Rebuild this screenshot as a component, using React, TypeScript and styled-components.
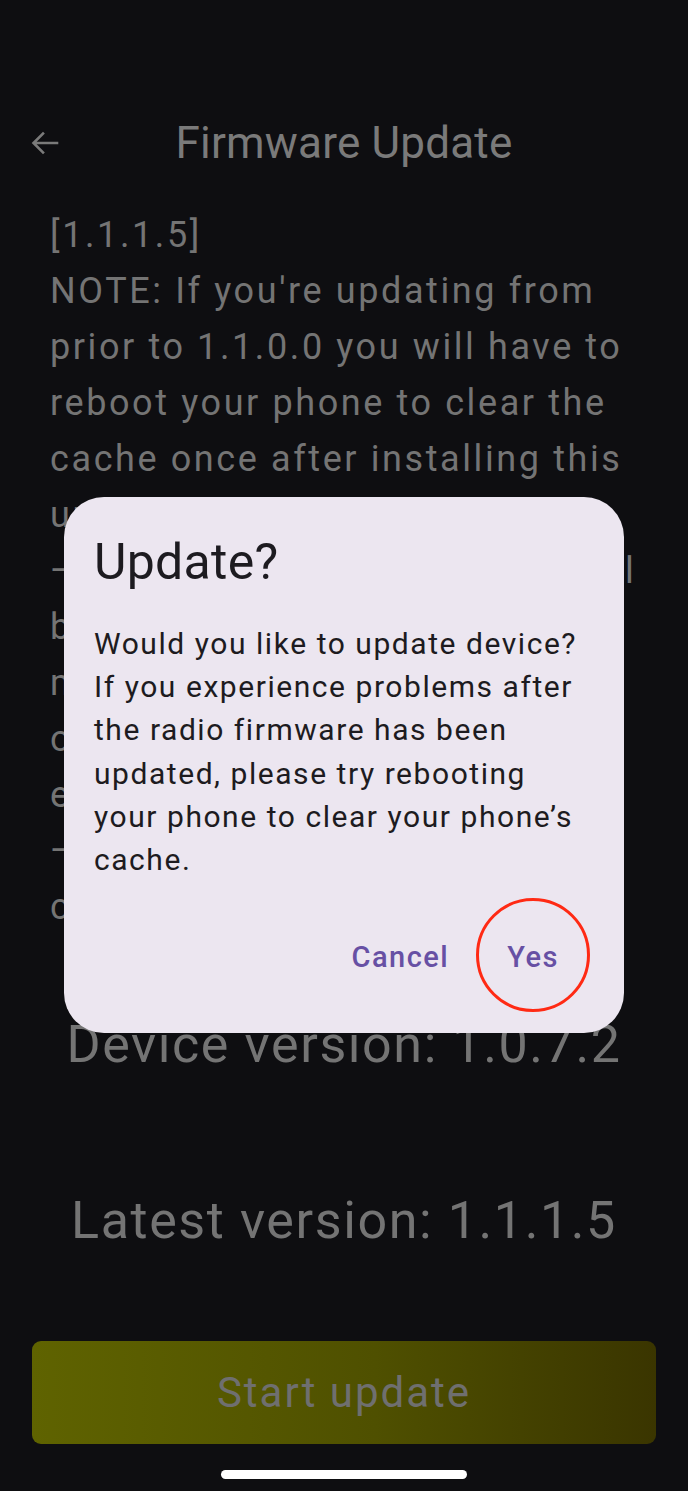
import React from "react";
import styled, { createGlobalStyle } from "styled-components";

const Global = createGlobalStyle`
  html, body { margin: 0; padding: 0; background: #0e0e11; }
  body { font-family: Roboto, "Noto Sans", sans-serif; }
  * { box-sizing: border-box; }
`;

const Page = styled.div`
  position: relative;
  width: 688px;
  height: 1491px;
  background: #0e0e11;
  display: flex;
  flex-direction: column;
  padding-top: 100px;
  overflow: hidden;
`;

const Header = styled.header`
  position: relative;
  height: 86px;
  display: flex;
  align-items: center;
  justify-content: center;
`;

const BackButton = styled.button`
  position: absolute;
  left: 22px;
  top: 50%;
  transform: translateY(-50%);
  width: 46px;
  height: 46px;
  border: none;
  background: transparent;
  padding: 0;
  display: flex;
  align-items: center;
  justify-content: center;
`;

const Title = styled.h1`
  margin: 0;
  font-family: Roboto, sans-serif;
  font-weight: 400;
  font-size: 44px;
  color: #7a7a7a;
  letter-spacing: 0.2px;
`;

const Notes = styled.div`
  margin-top: 21px;
  padding: 0 0 0 50px;
  font-size: 36px;
  line-height: 56px;
  letter-spacing: 2.6px;
  color: #747474;
  white-space: nowrap;
`;

const NoteLine = styled.div``;

const Version = styled.div<{ $gap: number }>`
  margin-top: ${(p) => p.$gap}px;
  text-align: center;
  font-size: 52px;
  line-height: 62px;
  letter-spacing: 1.6px;
  color: #747474;
`;

const StartButton = styled.button`
  margin: 89px 32px 0;
  height: 103px;
  border: none;
  border-radius: 9px;
  background: linear-gradient(90deg, #5f6300 0%, #4f5000 55%, #3a3500 100%);
  color: #6f6f6f;
  font-family: Roboto, sans-serif;
  font-size: 42px;
  letter-spacing: 2px;
`;

const HomeIndicator = styled.div`
  margin: 26px auto 0;
  width: 246px;
  height: 9px;
  border-radius: 5px;
  background: #ffffff;
`;

const Overlay = styled.div`
  position: absolute;
  inset: 0;
  display: flex;
  justify-content: center;
  padding-top: 497px;
`;

const Dialog = styled.div`
  width: 560px;
  height: 536px;
  background: #ece6f0;
  border-radius: 40px;
  padding: 35px 30px 0 30px;
  display: flex;
  flex-direction: column;
`;

const DialogTitle = styled.h2`
  margin: 0;
  font-family: Roboto, sans-serif;
  font-weight: 400;
  font-size: 50px;
  line-height: 60px;
  letter-spacing: 0.3px;
  color: #1d1b20;
`;

const DialogBody = styled.p`
  margin: 30px 0 0;
  font-family: Roboto, sans-serif;
  font-size: 30px;
  line-height: 43.2px;
  letter-spacing: 1.55px;
  color: #1d1b20;
`;

const Actions = styled.div`
  margin-top: 36px;
  display: flex;
  justify-content: flex-end;
  gap: 10px;
  padding-right: 11px;
`;

const TextButton = styled.button<{ $marked?: boolean }>`
  position: relative;
  height: 80px;
  padding: 0 24px;
  border: none;
  background: transparent;
  font-family: Roboto, sans-serif;
  font-weight: 500;
  font-size: 29px;
  letter-spacing: 1.5px;
  color: #6750a4;
  ${(p) =>
    p.$marked &&
    `
    &::after {
      content: "";
      position: absolute;
      left: 50%;
      top: 50%;
      width: 108px;
      height: 108px;
      transform: translate(-50%, -50%);
      margin-top: -2px;
      border: 3px solid #ff2a14;
      border-radius: 50%;
    }
  `}
`;

const notes = [
  "[1.1.1.5]",
  "NOTE: If you're updating from",
  "prior to 1.1.0.0 you will have to",
  "reboot your phone to clear the",
  "cache once after installing this",
  "update.",
  "— Fixed issues with the channel",
  "being reset after",
  "multiple reconnects",
  "over Bluetooth",
  "error handling improvements",
  "— Improved stability of the",
  "connection",
];

export default function App() {
  return (
    <>
      <Global />
      <Page>
        <Header>
          <BackButton aria-label="Back">
            <svg width="30" height="30" viewBox="0 0 30 30" fill="none">
              <path
                d="M27 15H4M13 5.5L3.5 15L13 24.5"
                stroke="#7a7a7a"
                strokeWidth="2.6"
                strokeLinecap="square"
              />
            </svg>
          </BackButton>
          <Title>Firmware Update</Title>
        </Header>
        <Notes>
          {notes.map((n, i) => (
            <NoteLine key={i}>{n}</NoteLine>
          ))}
        </Notes>
        <Version $gap={79}>Device version: 1.0.7.2</Version>
        <Version $gap={114}>Latest version: 1.1.1.5</Version>
        <StartButton>Start update</StartButton>
        <HomeIndicator />
        <Overlay>
          <Dialog>
            <DialogTitle>Update?</DialogTitle>
            <DialogBody>
              Would you like to update device? If you experience problems after
              the radio firmware has been updated, please try rebooting your
              phone to clear your phone’s cache.
            </DialogBody>
            <Actions>
              <TextButton>Cancel</TextButton>
              <TextButton $marked>Yes</TextButton>
            </Actions>
          </Dialog>
        </Overlay>
      </Page>
    </>
  );
}
